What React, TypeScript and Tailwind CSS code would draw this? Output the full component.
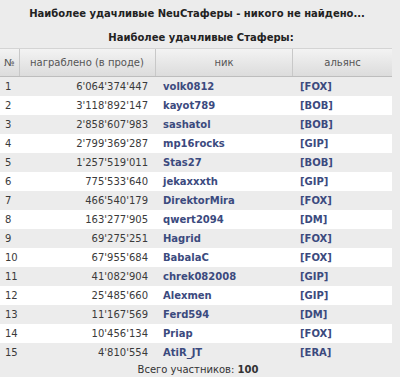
import React from "react";

const rows: [string, string, string, string][] = [
  ["1", "6'064'374'447", "volk0812", "[FOX]"],
  ["2", "3'118'892'147", "kayot789", "[BOB]"],
  ["3", "2'858'607'983", "sashatol", "[BOB]"],
  ["4", "2'799'369'287", "mp16rocks", "[GIP]"],
  ["5", "1'257'519'011", "Stas27", "[BOB]"],
  ["6", "775'533'640", "jekaxxxth", "[GIP]"],
  ["7", "466'540'179", "DirektorMira", "[FOX]"],
  ["8", "163'277'905", "qwert2094", "[DM]"],
  ["9", "69'275'251", "Hagrid", "[FOX]"],
  ["10", "67'955'684", "BabalaC", "[FOX]"],
  ["11", "41'082'904", "chrek082008", "[GIP]"],
  ["12", "25'485'660", "Alexmen", "[GIP]"],
  ["13", "11'167'569", "Ferd594", "[DM]"],
  ["14", "10'456'134", "Priap", "[FOX]"],
  ["15", "4'810'554", "AtiR_JT", "[ERA]"],
];

export default function App() {
  return (
    <div
      className="w-[400px] h-[377px] bg-[#ececec] text-[#3a3a3a] overflow-hidden"
      style={{ fontFamily: '"DejaVu Sans", Verdana, sans-serif' }}
    >
      <div className="h-[27px] flex items-center justify-center text-[10px] font-bold text-[#222] pr-[6px]">
        Наиболее удачливые NeuCтаферы - никого не найдено...
      </div>
      <div className="h-[21px] flex items-center justify-center text-[10px] font-bold text-[#222] pl-[2px]">
        Наиболее удачливые Стаферы:
      </div>
      <div className="w-[392px] border-t border-[#d4d4d4]">
        <div className="flex h-[28px] text-[10px] text-[#555] bg-gradient-to-b from-[#f3f3f3] to-[#dcdcdc] border-b border-[#bdbdbd]">
          <div className="w-[20px] flex items-center pl-[4px] border-r border-[#c8c8c8]">№</div>
          <div className="w-[136px] flex items-center pl-[10px] border-r border-[#c8c8c8]">награблено (в проде)</div>
          <div className="w-[137px] flex items-center justify-center border-r border-[#c8c8c8]">ник</div>
          <div className="flex-1 flex items-center justify-center">альянс</div>
        </div>
        {rows.map((r, i) => (
          <div
            key={r[0]}
            className={
              "flex h-[19px] items-center text-[10px] " +
              (i % 2 === 1 ? "bg-white" : "bg-[#ececec]")
            }
          >
            <div className="w-[20px] pl-[5px]">{r[0]}</div>
            <div className="w-[128px] text-right">{r[1]}</div>
            <div className="w-[152px] pl-[15px] font-bold text-[#3b4a7e]">{r[2]}</div>
            <div className="flex-1 font-bold text-[#3b4a7e]">{r[3]}</div>
          </div>
        ))}
      </div>
      <div className="h-[15px] flex items-center justify-center text-[10px] text-[#333] pr-[4px]">
        Всего участников:&nbsp;<span className="font-bold text-[10px]">100</span>
      </div>
    </div>
  );
}
